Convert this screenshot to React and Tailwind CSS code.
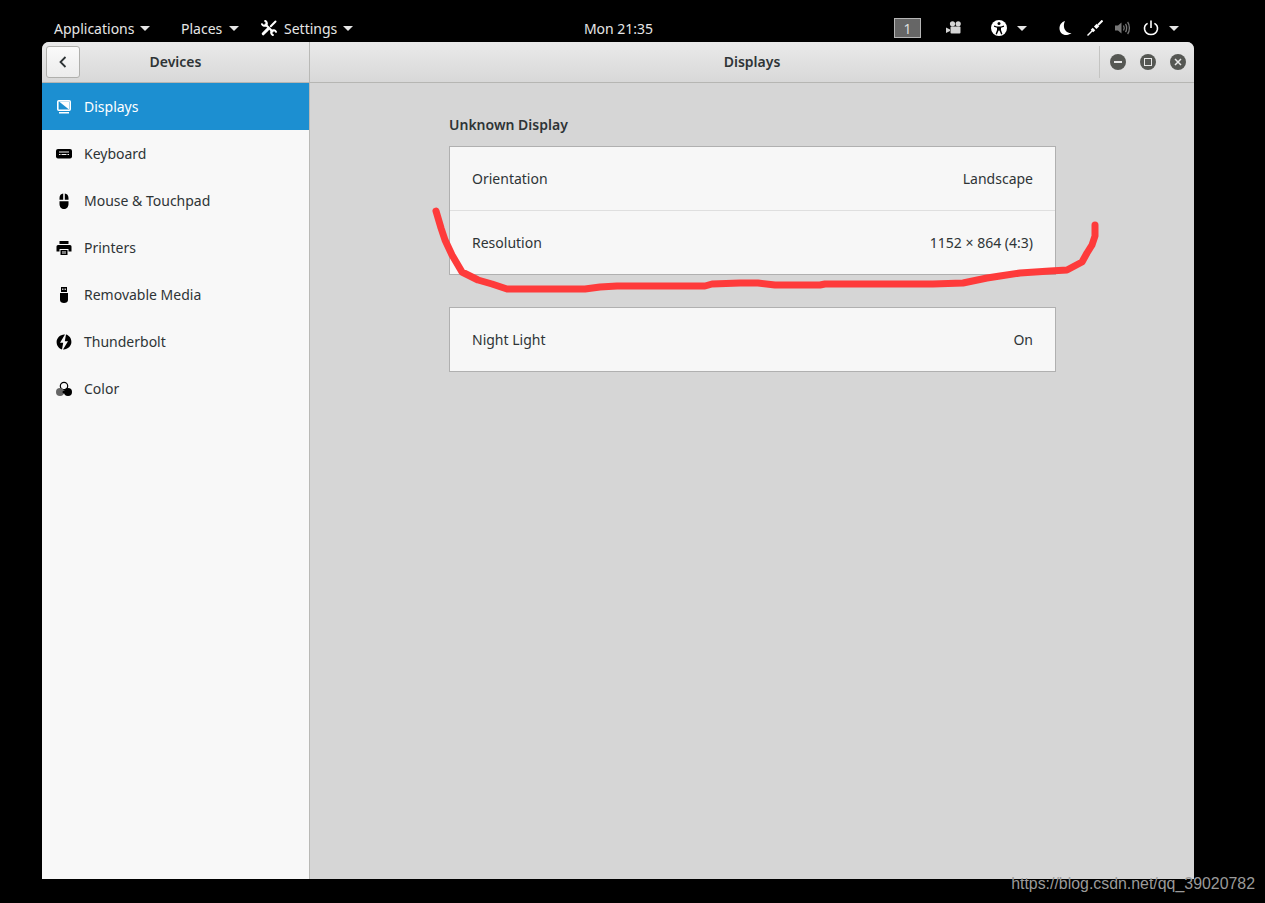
const FONT = "font-['Noto_Sans',sans-serif]";

function Caret({ className = "" }) {
  return (
    <svg width="10" height="5" viewBox="0 0 10 5" className={className}>
      <path d="M0 0h10L5 5z" fill="currentColor" />
    </svg>
  );
}

function WrenchIcon() {
  return (
    <svg width="16" height="16" viewBox="0 0 16 16" fill="none" stroke="#fff" strokeLinecap="round">
      <path d="M4.500 4.500 11.500 11.500" strokeWidth="2.200" />
      <path d="M4.200 1C6 1.800 6.300 4 5.200 5.200 4 6.300 1.800 6 1 4.200" strokeWidth="2" />
      <path d="M15 11.800C14.200 10 12 9.700 10.800 10.800 9.700 12 10 14.200 11.800 15" strokeWidth="2" />
      <path d="M14.500 1.500 9.800 6.200" strokeWidth="2" />
      <path d="M6.600 9.400 2.200 13.800" strokeWidth="3" />
    </svg>
  );
}

function CameraIcon() {
  return (
    <svg width="16" height="16" viewBox="0 0 16 16" fill="#d4d4d4">
      <circle cx="6.500" cy="3.800" r="2.600" />
      <circle cx="12.200" cy="3.800" r="2.600" />
      <rect x="4.500" y="6.500" width="10" height="7" rx="1" />
      <path d="M0 7.500 4 9.500V11L0 13z" />
    </svg>
  );
}

function A11yIcon() {
  return (
    <svg width="16" height="16" viewBox="0 0 16 16">
      <circle cx="8" cy="8" r="8" fill="#fff" />
      <circle cx="8" cy="3.600" r="1.500" fill="#000" />
      <path d="M3.200 5.600 6 6.400H10L12.800 5.600 13.100 6.700 10 7.800V10L11.400 14 10.200 14.400 8.400 10.600H7.600L5.800 14.400 4.600 14 6 10V7.800L2.900 6.700z" fill="#000" />
    </svg>
  );
}

function MoonIcon() {
  return (
    <svg width="16" height="16" viewBox="0 0 16 16" fill="#fff">
      <path d="M7 1C3.500 2 1.500 5 1.500 8.500 1.500 12.500 5 15.500 9 15 10.500 14.800 12 14.200 13.500 13 9.500 13.500 6.500 10.500 6 7 5.700 5 6 3 7 1z" />
    </svg>
  );
}

function PlugIcon() {
  return (
    <svg width="16" height="16" viewBox="0 0 16 16" fill="none" stroke="#fff">
      <path d="M.5 15.500 5.500 10.500" strokeWidth="1.400" />
      <path d="M5 11 7 9" strokeWidth="3.600" />
      <path d="M8.200 7.800 11 5" strokeWidth="3.600" />
      <path d="M11 5 15.500.5" strokeWidth="2" />
    </svg>
  );
}

function SpeakerIcon() {
  return (
    <svg width="16" height="16" viewBox="0 0 16 16" fill="none" stroke="#777">
      <path d="M0 5.500H3L6.500 2.500V13.500L3 10.500H0z" fill="#777" stroke="none" />
      <path d="M8.500 5.500C9.400 7 9.400 9 8.500 10.500M10.500 3.800C12 6 12 10 10.500 12.200M12.600 2C15 5 15 11 12.600 14" strokeWidth="1.300" />
    </svg>
  );
}

function PowerIcon() {
  return (
    <svg width="16" height="16" viewBox="0 0 16 16" fill="none" stroke="#fff" strokeWidth="1.600">
      <path d="M4.600 3.400C2.400 4.600 1.200 7 1.600 9.400 2.200 12.400 4.800 14.500 8 14.500S13.800 12.400 14.400 9.400C14.800 7 13.600 4.600 11.400 3.400" />
      <path d="M8 .5V8" />
    </svg>
  );
}

function WindowButton({ children }) {
  return (
    <div className="w-4 h-4 rounded-full bg-[#555753] flex items-center justify-center">
      {children}
    </div>
  );
}

const icons = {
  Displays: (
    <svg width="16" height="16" viewBox="0 0 16 16" fill="none">
      <rect x="1.800" y="1.800" width="12.400" height="9.400" rx="1" stroke="currentColor" strokeWidth="1.600" />
      <path d="M3 2.500 13 10.500 13 2.500z" fill="currentColor" />
      <rect x="3" y="13" width="10" height="1.500" fill="currentColor" />
    </svg>
  ),
  Keyboard: (
    <svg width="16" height="16" viewBox="0 0 16 16">
      <rect x="0" y="3" width="16" height="9.500" rx="2" fill="currentColor" />
      <path d="M3 5.500h10v1H3zM3 8h1.500v1H3zM5.500 8h5v1h-5zM11.500 8H13v1h-1.500z" fill="#f8f8f8" />
    </svg>
  ),
  "Mouse & Touchpad": (
    <svg width="16" height="16" viewBox="0 0 16 16" fill="currentColor">
      <path d="M3.500 6.800V5C3.500 2.400 5 .6 7.200 .5V6.800zM8.800 .5C11 .6 12.500 2.400 12.500 5V6.800H8.800zM3.500 8.200h9V11c0 3-2 5-4.500 5s-4.500-2-4.500-5z" />
    </svg>
  ),
  Printers: (
    <svg width="16" height="16" viewBox="0 0 16 16" fill="currentColor">
      <path d="M3.500 1h9v3h-9zM2 5h12a1.500 1.500 0 0 1 1.500 1.500V11.500H12.500V9h-9V11.500H.5V6.500A1.500 1.500 0 0 1 2 5z" />
      <path d="M4.500 10h7v5h-7zM6 11.500v1h4v-1zM6 13.200v.6h4v-.6z" fillRule="evenodd" />
    </svg>
  ),
  "Removable Media": (
    <svg width="16" height="16" viewBox="0 0 16 16" fill="currentColor">
      <path d="M5 0h6v5H5zM6.200 1.500v1.500h1.200V1.500zM8.600 1.500v1.500h1.200V1.500z" fillRule="evenodd" />
      <path d="M4 6h8v7c0 1.800-1.600 3-4 3s-4-1.200-4-3z" />
    </svg>
  ),
  Thunderbolt: (
    <svg width="16" height="16" viewBox="0 0 16 16" fill="currentColor">
      <path d="M9 .6 4 8.800H7.200L6 15.400C3 14.800 .6 11.700 .6 8 .6 4 4.500 .2 9 .6z" />
      <path d="M7 15.400 12 7.200H8.800L10 .6C13 1.200 15.400 4.300 15.400 8 15.400 12 11.500 15.800 7 15.400z" />
    </svg>
  ),
  Color: (
    <svg width="16" height="16" viewBox="0 0 16 16">
      <circle cx="8" cy="5" r="3.700" fill="#f8f8f8" stroke="currentColor" strokeWidth="1.200" />
      <circle cx="4" cy="11" r="4" fill="#666" />
      <circle cx="12" cy="11" r="4" fill="currentColor" />
      <circle cx="8" cy="11" r="1.500" fill="currentColor" />
    </svg>
  ),
};

const devices = ["Displays", "Keyboard", "Mouse & Touchpad", "Printers", "Removable Media", "Thunderbolt", "Color"];

function SettingRow({ label, value, divided }) {
  return (
    <div className={`px-[22px] flex items-center justify-between text-[14px] text-[#2e3436] ${divided ? "h-16 border-t border-[#dfdfdf]" : "h-[63px]"}`}>
      <span>{label}</span>
      <span>{value}</span>
    </div>
  );
}

export default function App() {
  return (
    <div className={`relative w-[1265px] h-[903px] overflow-hidden bg-black ${FONT}`}>
      {/* Top bar */}
      <div className="h-[42px] flex items-center pt-[14px] text-[14px] text-[#e6e6e6]">
        <div className="ml-[54px] w-[96px] flex items-center justify-between">
          <span>Applications</span>
          <Caret />
        </div>
        <div className="ml-[31px] w-[58px] flex items-center justify-between">
          <span>Places</span>
          <Caret />
        </div>
        <div className="ml-[22px] w-[92px] flex items-center">
          <WrenchIcon />
          <span className="ml-[7px]">Settings</span>
          <Caret className="ml-auto" />
        </div>
        <div className="ml-[229px] w-[73px] text-center">Mon 21:35</div>
        <div className="ml-[239px] w-[27px] h-5 bg-[#666] border border-[#b5b5b5] flex items-center justify-center text-[14px] text-[#ddd]">1</div>
        <div className="ml-[25px]"><CameraIcon /></div>
        <div className="ml-[29px]"><A11yIcon /></div>
        <Caret className="ml-[10px]" />
        <div className="ml-[31px]"><MoonIcon /></div>
        <div className="ml-[13px]"><PlugIcon /></div>
        <div className="ml-[12px]"><SpeakerIcon /></div>
        <div className="ml-[12px]"><PowerIcon /></div>
        <Caret className="ml-[10px]" />
      </div>

      {/* Window */}
      <div className="ml-[42px] w-[1152px] h-[837px] flex flex-col rounded-t-[7px] overflow-hidden bg-[#d6d6d6]">
        <div className="h-[41px] flex shrink-0 border-b border-[#b6b6b3] bg-gradient-to-b from-[#eaeaea] to-[#d8d8d8]">
          <div className="relative w-[268px] shrink-0 flex items-center justify-center pb-[2px] border-r border-[#b9b9b6] text-[14px] font-semibold text-[#2e3436]">
            <button className="absolute left-1 top-1 w-[34px] h-8 flex items-center justify-center rounded-[3px] border border-[#b0b0ad] bg-gradient-to-b from-[#fafafa] to-[#ececec]">
              <svg width="16" height="16" viewBox="0 0 16 16" fill="none" stroke="#2e3436" strokeWidth="1.800">
                <path d="M10.500 3 5.500 8l5 5" />
              </svg>
            </button>
            Devices
          </div>
          <div className="flex-1 flex items-center justify-center pl-[95px] pb-[2px] text-[14px] font-semibold text-[#2e3436]">
            Displays
          </div>
          <div className="w-[95px] shrink-0 flex items-center">
            <div className="w-px h-8 bg-[#c4c4c2]" />
            <div className="ml-[10px] flex gap-[14px]">
              <WindowButton>
                <div className="w-2 h-[2px] bg-[#e8e8e8]" />
              </WindowButton>
              <WindowButton>
                <div className="w-2 h-2 border-[1.500px] border-[#e8e8e8]" />
              </WindowButton>
              <WindowButton>
                <svg width="8" height="8" viewBox="0 0 8 8" stroke="#e8e8e8" strokeWidth="1.500">
                  <path d="M1 1l6 6M7 1 1 7" />
                </svg>
              </WindowButton>
            </div>
          </div>
        </div>

        <div className="flex flex-1 min-h-0">
          {/* Sidebar */}
          <div className="w-[268px] shrink-0 bg-[#f8f8f8] border-r border-[#b9b9b6]">
            {devices.map((name, i) => (
              <div
                key={name}
                className={`h-[47px] pl-[14px] flex items-center gap-[12px] text-[14px] ${i === 0 ? "bg-[#1c8fd1] text-white" : "text-[#2e3436]"}`}
              >
                <span className={i === 0 ? "text-white" : "text-black"}>{icons[name]}</span>
                <span>{name}</span>
              </div>
            ))}
          </div>

          {/* Content */}
          <div className="flex-1 pl-[139px] pt-[32px]">
            <div className="text-[14px] leading-5 font-semibold text-[#2e3436]">Unknown Display</div>
            <div className="mt-[11px] w-[607px] bg-[#f7f7f7] border border-[#b0b0b0]">
              <SettingRow label="Orientation" value="Landscape" />
              <SettingRow label="Resolution" value="1152 × 864 (4:3)" divided />
            </div>
            <div className="mt-[32px] w-[607px] bg-[#f7f7f7] border border-[#b0b0b0]">
              <SettingRow label="Night Light" value="On" />
            </div>
          </div>
        </div>
      </div>

      {/* Red marker scribble on top of the screenshot */}
      <svg className="absolute left-0 top-0 pointer-events-none" width="1265" height="903" fill="none">
        <path
          d="M436 211 441 228 445 240 452 255 462 272 478 280 492 284 507 289 540 289 585 289 600 287 617 286 650 286 705 286 712 284 740 283 758 283 775 285 820 285 825 284 933 284 963 283 987 278 1000 276 1020 273 1050 271 1067 270 1082 262 1087 253 1092 245 1095 236 1095 225"
          stroke="#fe3b3b"
          strokeWidth="7"
          strokeLinecap="round"
          strokeLinejoin="round"
        />
      </svg>

      {/* Watermark */}
      <div className="absolute right-[10px] top-[874px] text-[15.900px] leading-5 font-['Liberation_Sans',sans-serif] text-[#9a9a9a]">
        https://blog.csdn.net/qq_39020782
      </div>
    </div>
  );
}
